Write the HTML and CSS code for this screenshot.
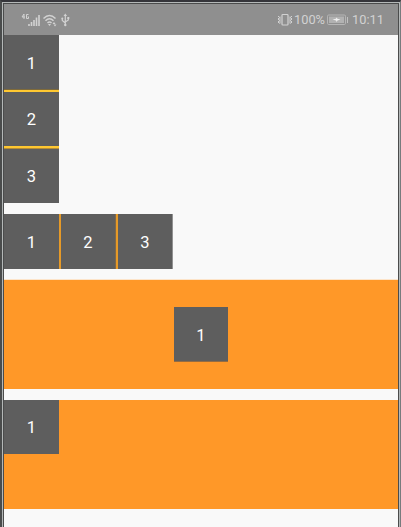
FILE: index.html
```html
<!DOCTYPE html>
<html lang="en">
<head>
<meta charset="utf-8">
<title>Layouts</title>
<link rel="stylesheet" href="styles.css">
</head>
<body>
<div class="bezel">
<main class="screen">
  <header class="status">
    <svg class="left-icons" width="54" height="16" viewBox="0 0 54 16">
      <g fill="none" stroke="#d2d2d2">
        <path d="M3 2L1 5h3M3 2v5M7.500 2.500H5.500v4h2V4.800H6.700" stroke-width="1"/>
        <path d="M8 14v-2M10.500 14v-4M13 14V8M15.500 14V5.500M18 14V3" stroke-width="1.600"/>
        <path d="M22.500 6.500Q28.500 .500 34.500 6.500M24.500 8.800Q28.500 4.800 32.500 8.800M26.500 11Q28.500 9 30.500 11" stroke-width="1.500"/>
        <path d="M44.300 3v10M41.300 6.500v2l3 2.500M47.300 6v2l-3 2" stroke-width="1.200"/>
      </g>
      <g fill="#d2d2d2"><path d="M27 12h3l-1.500 2zM31.500 12l1.500-2 1.500 2zM32.500 12.500h3l-1.500 2zM42.500 4L44.300 1.500 46.100 4z"/><circle cx="44.300" cy="13" r="1.200"/><circle cx="41.300" cy="6.500" r="1"/><path d="M46.300 5h2v2h-2z"/></g>
    </svg>
    <div class="right">
      <svg class="vibrate" width="16" height="14" viewBox="0 0 16 14" fill="none" stroke="#d2d2d2">
        <rect x="5" y="1.500" width="6" height="10.500" rx=".8" stroke-width="1.200"/>
        <path d="M1 3l1.500 1.500L1 6l1.500 1.500L1 9l1.500 1.500M3 3.500v7M15 3l-1.500 1.500L15 6l-1.500 1.500L15 9l-1.500 1.500M13 3.500v7" stroke-width="1"/>
      </svg>
      <span class="percent">100%</span>
      <svg class="battery" width="22" height="12" viewBox="0 0 22 12">
        <rect x=".500" y="1" width="18" height="9.500" rx="1.200" fill="none" stroke="#b5b5b5"/>
        <rect x="2" y="2.500" width="15" height="6.500" fill="#b2b2b2"/>
        <path d="M5.500 5.500L9 4.800 9.300 3.500 10.500 4.800 13.500 5.500 10.500 6.500 9.500 8 9 6.500z" fill="#eee"/>
        <path d="M20.500 3v6" stroke="#c0c0c0"/>
      </svg>
      <span class="clock">10:11</span>
    </div>
  </header>
  <section class="stack">
    <div class="box">1</div><div class="box">2</div><div class="box">3</div>
  </section>
  <section class="row">
    <div class="box">1</div><div class="box">2</div><div class="box">3</div>
  </section>
  <section class="panel centered"><div class="box">1</div></section>
  <section class="panel"><div class="box">1</div></section>
</main>
</div>
</body>
</html>
```
FILE: styles.css
```css
* { box-sizing: border-box; }
body {
  margin: 0;
  height: 527px;
  overflow: hidden;
  background: #484a4a;
  font-family: Roboto, "Liberation Sans", sans-serif;
}
.bezel {
  height: 527px;
  border: solid #35353a;
  border-width: 2px 1px 0 2px;
  border-left-color: #4a4c4c;
  border-right-color: #777b7d;
  background: #b4b8b8;
  padding: 1px 1px 0;
}
.screen {
  height: 524px;
  border: 1px solid #4b4c4c;
  border-bottom: 0;
  background: #f9f9f9;
}
.status {
  height: 31px;
  display: flex;
  align-items: center;
  justify-content: space-between;
  padding: 0 15px 0 17px;
  background: #8f8f8f;
  color: #d2d2d2;
  font-size: 12.8px;
}
.right { display: flex; align-items: center; }
.vibrate { margin-right: 1px; }
.percent { width: 33px; white-space: nowrap; }
.battery { margin-right: 3px; }
.clock { width: 31px; white-space: nowrap; }
.box {
  width: 55px;
  height: 55px;
  display: flex;
  align-items: center;
  justify-content: center;
  padding-top: 1px;
  background: #5e5e5e;
  color: #fff;
  font-size: 16.5px;
}
.stack {
  width: 55px;
  height: 168px;
  display: grid;
  row-gap: 2px;
  grid-template-rows: 55px 54px 55px;
  background: #ffc831;
}
.stack .box { height: auto; }
.stack .box:first-child { border-bottom: 1px solid #806b3a; padding-top: 2px; }
.stack .box:last-child { border-top: 1px solid #b78f36; }
.row {
  width: 169px;
  height: 55px;
  margin-top: 11px;
  display: grid;
  grid-template-columns: 55px 55px 55px;
  column-gap: 2px;
  background: #e69a28;
}
.row .box { width: auto; }
.row .box:nth-child(2) { border-right: 1px solid #80684a; }
.row .box:last-child { border-right: 1px solid #929292; }
.panel {
  height: 110px;
  margin-top: 10px;
  border-top: 1px solid #fde4c9;
  background: #ff9828;
}
.panel .box { height: 54px; }
.panel.centered {
  padding-top: 27px;
  display: flex;
  justify-content: center;
}
.centered .box {
  width: 54px;
  height: 55px;
  padding-top: 2px;
  border-bottom: 1px solid #946c43;
}
.centered + .panel {
  height: 109px;
  margin-top: 11px;
  border-top: 0;
}
```
